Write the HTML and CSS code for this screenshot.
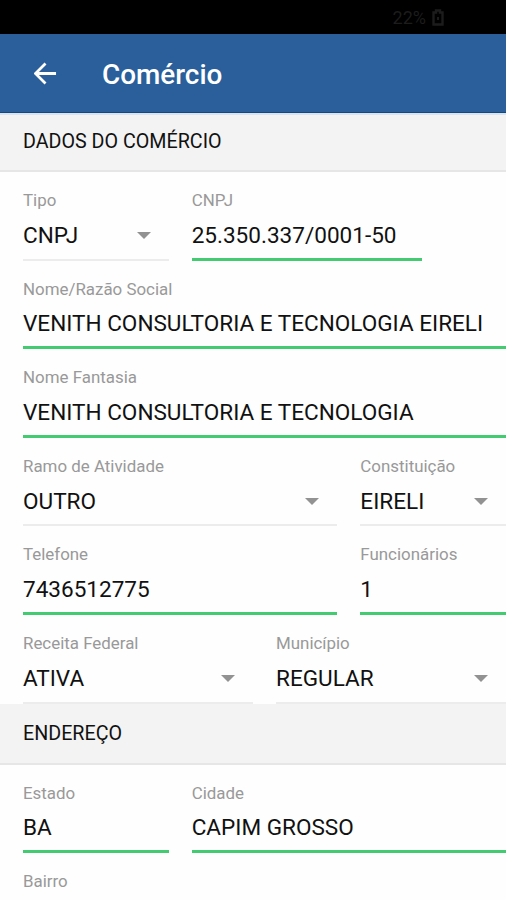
FILE: index.html
```html
<!DOCTYPE html>
<html lang="pt-BR">
<head>
<meta charset="utf-8">
<title>Comércio</title>
<link rel="stylesheet" href="styles.css">
</head>
<body>
<div class="status">
  <span class="battery-text">22%</span>
  <svg class="battery" viewBox="0 0 12 17"><path d="M4 1.5h4v2h2.5v12h-9v-12H4z" fill="none" stroke="currentColor" stroke-width="2.4"/><path d="M5 8h2v3H5z" fill="currentColor"/></svg>
</div>
<header class="toolbar">
  <svg class="back" viewBox="0 0 24 24"><path d="M23 12H2M12 1.5 1.5 12 12 22.5" fill="none" stroke="currentColor" stroke-width="2.9"/></svg>
  <h1 class="title">Comércio</h1>
</header>
<main>
  <h2 class="section first">DADOS DO COMÉRCIO</h2>
  <div class="row">
    <div class="field select w4"><label class="label">Tipo</label><div class="value">CNPJ</div></div>
    <div class="field w6"><label class="label">CNPJ</label><div class="value">25.350.337/0001-50</div></div>
  </div>
  <div class="row">
    <div class="field w12"><label class="label">Nome/Razão Social</label><div class="value">VENITH CONSULTORIA E TECNOLOGIA EIRELI</div></div>
  </div>
  <div class="row">
    <div class="field w12"><label class="label">Nome Fantasia</label><div class="value">VENITH CONSULTORIA E TECNOLOGIA</div></div>
  </div>
  <div class="row">
    <div class="field select w8"><label class="label">Ramo de Atividade</label><div class="value">OUTRO</div></div>
    <div class="field select w4"><label class="label">Constituição</label><div class="value">EIRELI</div></div>
  </div>
  <div class="row">
    <div class="field w8"><label class="label">Telefone</label><div class="value">7436512775</div></div>
    <div class="field w4"><label class="label">Funcionários</label><div class="value">1</div></div>
  </div>
  <div class="row">
    <div class="field select w6"><label class="label">Receita Federal</label><div class="value">ATIVA</div></div>
    <div class="field select w6"><label class="label">Município</label><div class="value">REGULAR</div></div>
  </div>
  <h2 class="section">ENDEREÇO</h2>
  <div class="row">
    <div class="field w4"><label class="label">Estado</label><div class="value">BA</div></div>
    <div class="field w8"><label class="label">Cidade</label><div class="value">CAPIM GROSSO</div></div>
  </div>
  <div class="row">
    <div class="field w12"><label class="label">Bairro</label><div class="value"></div></div>
  </div>
</main>
</body>
</html>
```

FILE: styles.css
```css
* { box-sizing: border-box; }
body {
  margin: 0;
  height: 900px;
  overflow: hidden;
  background: #fefefe;
  color: #111;
  font-family: Roboto, "Liberation Sans", sans-serif;
}
.status {
  display: flex;
  align-items: center;
  justify-content: flex-end;
  gap: 6px;
  height: 34px;
  padding: 1px 62px 0 0;
  background: #000;
  color: #1c1c1c;
  font-size: 18px;
}
.battery { width: 12px; height: 17px; }
.toolbar {
  display: flex;
  align-items: center;
  height: 79px;
  padding-left: 34px;
  background: #2a5f9b;
  border-bottom: 1px solid #13497f;
  color: #fff;
}
.back { width: 23px; height: 23px; }
.title {
  margin: 2px 0 0 45px;
  font-size: 27.9px;
  font-weight: 500;
}
.section {
  margin: 0;
  height: 61px;
  padding: 1px 23px 0;
  background: #f3f3f3;
  border-bottom: 2px solid #e6e6e6;
  font-size: 19.7px;
  font-weight: 400;
  line-height: 58px;
}
.section.first {
  height: 59px;
  padding-top: 0;
  border-top: 2px solid #dbe3ee;
  line-height: 54px;
}
.row { display: flex; height: 88.6px; }
.field {
  display: flex;
  flex-direction: column;
  padding: 18px 0 0 23px;
}
.field::after {
  content: "";
  margin-top: auto;
  height: 3px;
  background: #43cb72;
}
.select::after { height: 2px; background: #ececec; }
.w4 { width: 33.333%; }
.w6 { width: 50%; }
.w8 { width: 66.667%; }
.w12 { width: 100%; }
.label {
  color: #999;
  font-size: 16.9px;
  line-height: 20px;
}
.value {
  display: flex;
  align-items: center;
  justify-content: space-between;
  margin-top: 11.8px;
  height: 28px;
  font-size: 22.55px;
  line-height: 28px;
  white-space: nowrap;
}
.select .value { padding-right: 18px; }
.select .value::after {
  content: "";
  margin-top: -1px;
  border: 7px solid transparent;
  border-top: 7.5px solid #929292;
  border-bottom: 0;
}
```
